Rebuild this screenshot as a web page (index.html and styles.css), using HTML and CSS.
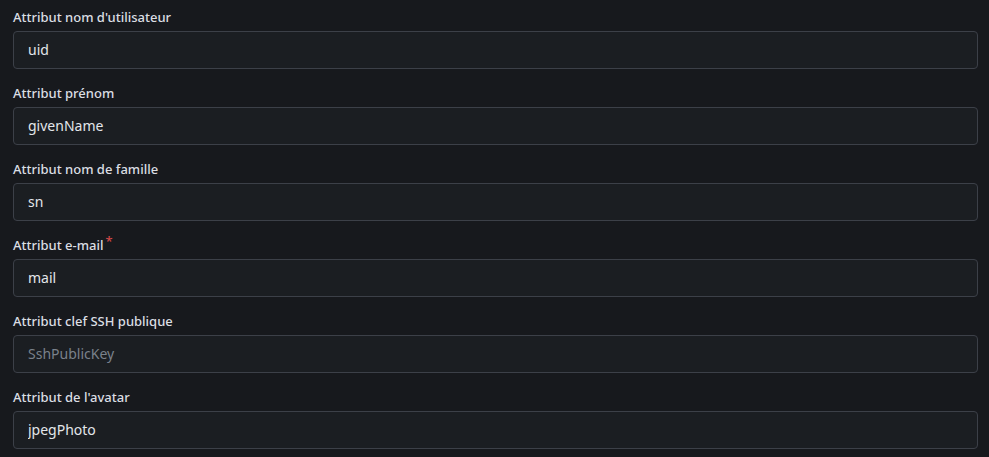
FILE: index.html
```html
<!DOCTYPE html>
<html lang="fr">
<head>
<meta charset="utf-8">
<link rel="stylesheet" href="styles.css">
</head>
<body>
<form class="form">
  <div class="field">
    <label class="label" for="f1">Attribut nom d'utilisateur</label>
    <input class="input" id="f1" value="uid">
  </div>
  <div class="field">
    <label class="label" for="f2">Attribut prénom</label>
    <input class="input" id="f2" value="givenName">
  </div>
  <div class="field">
    <label class="label" for="f3">Attribut nom de famille</label>
    <input class="input" id="f3" value="sn">
  </div>
  <div class="field">
    <label class="label required" for="f4">Attribut e-mail</label>
    <input class="input" id="f4" value="mail">
  </div>
  <div class="field">
    <label class="label" for="f5">Attribut clef SSH publique</label>
    <input class="input" id="f5" placeholder="SshPublicKey">
  </div>
  <div class="field">
    <label class="label" for="f6">Attribut de l'avatar</label>
    <input class="input" id="f6" value="jpegPhoto">
  </div>
</form>
</body>
</html>
```
FILE: styles.css
```css
html, body {
  margin: 0;
  background: #17191d;
}
body {
  font-family: "Noto Sans", "Open Sans", sans-serif;
  color: #dbdee3;
}
.form {
  padding: 7px 11px 0 13px;
}
.field {
  display: flex;
  flex-direction: column;
  margin-bottom: 14px;
}
.label {
  font-size: 13px;
  font-weight: 500;
  line-height: 20px;
  margin-bottom: 4px;
  color: #dbdee3;
}
.required::after {
  content: "*";
  color: #d04848;
  margin-left: 2px;
  position: relative;
  top: -4px;
}
.input {
  box-sizing: border-box;
  height: 38px;
  padding: 0 14px 1px;
  font-family: inherit;
  font-size: 14px;
  color: #e3e6ea;
  background: #1b1e22;
  border: 1px solid #3c4048;
  border-radius: 4px;
  outline: none;
}
.input::placeholder {
  color: #7a818b;
}
```
